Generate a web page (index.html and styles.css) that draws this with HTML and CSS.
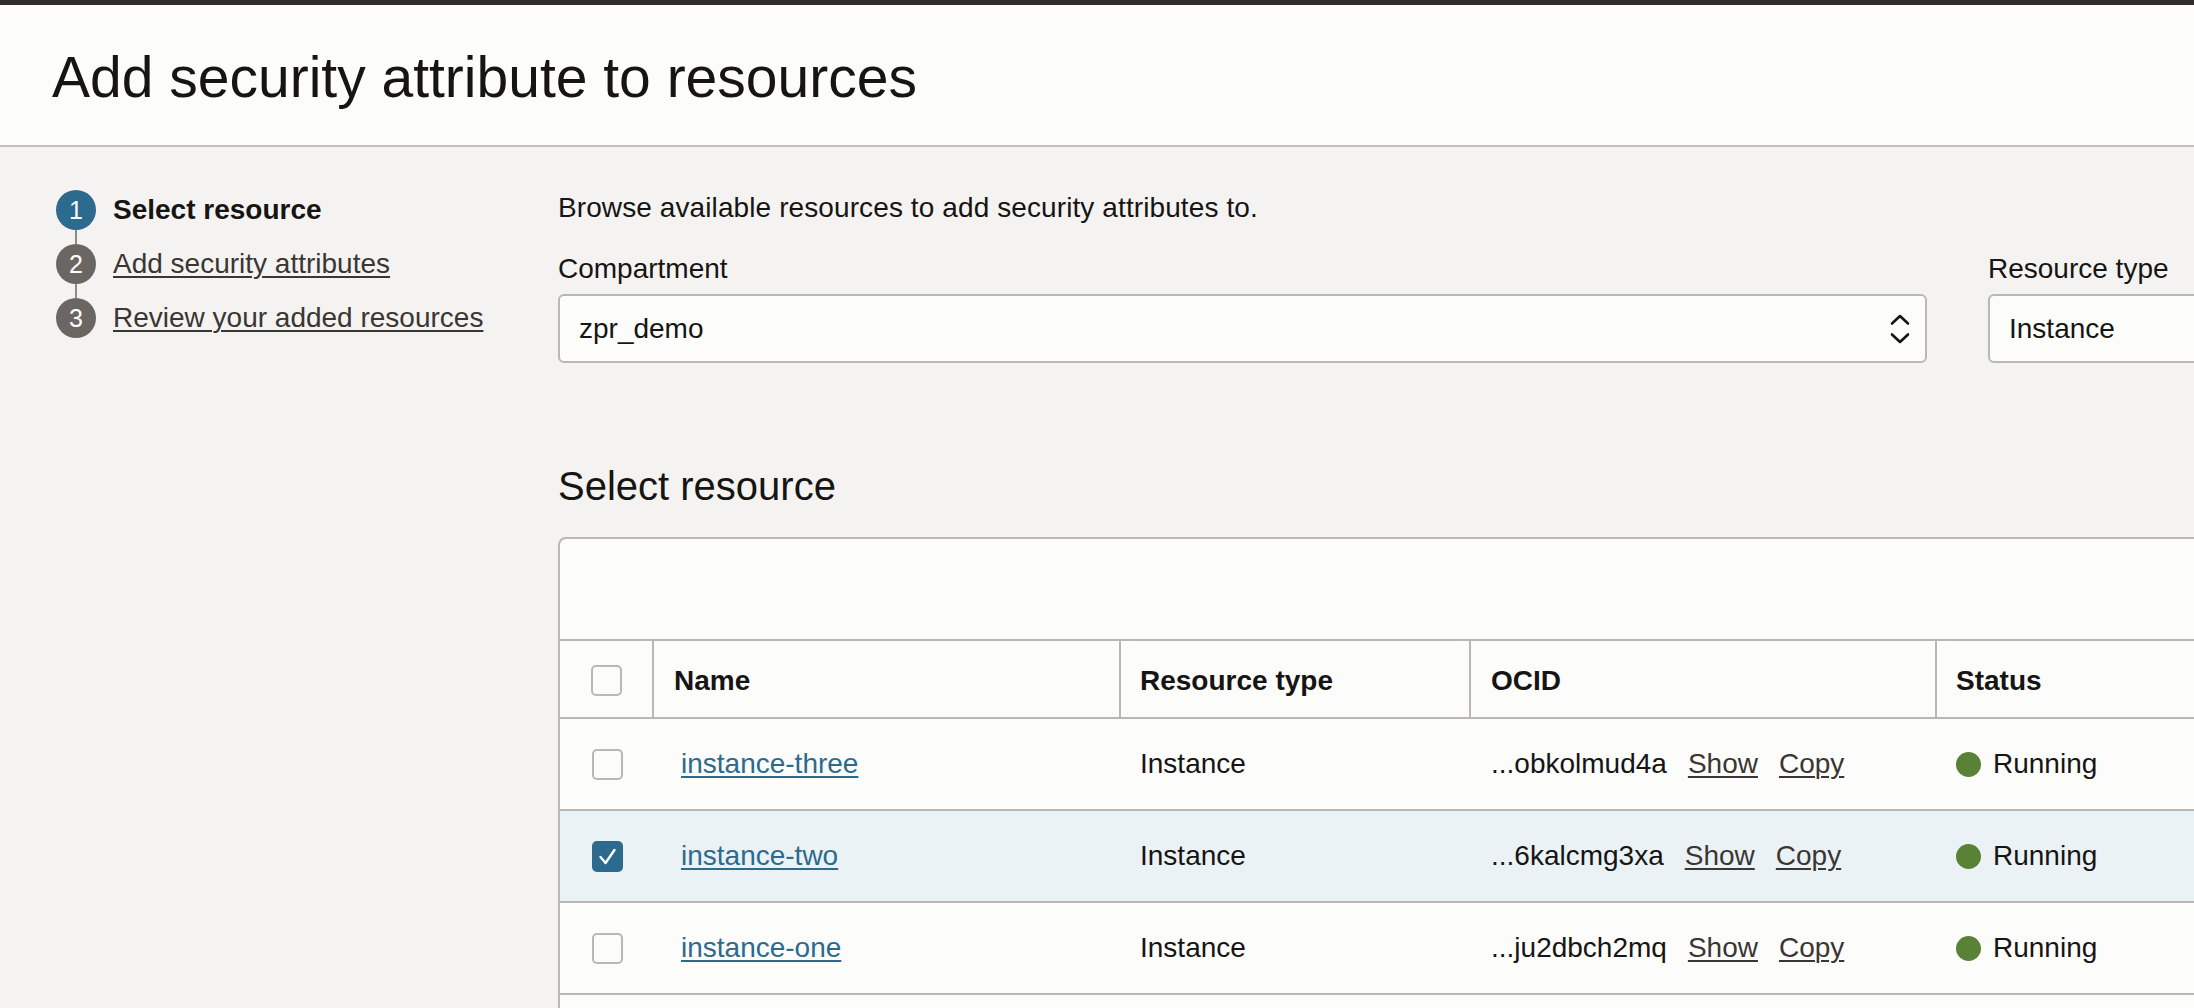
FILE: index.html
```html
<!DOCTYPE html>
<html lang="en">
<head>
<meta charset="utf-8">
<title>Add security attribute to resources</title>
<link rel="stylesheet" href="styles.css">
</head>
<body>
<div class="topbar"></div>
<header class="page-header">
  <h1 class="page-title">Add security attribute to resources</h1>
</header>
<div class="layout">
  <nav class="steps">
    <div class="step active">
      <span class="num">1</span>
      <span class="step-label">Select resource</span>
    </div>
    <div class="step">
      <span class="num">2</span>
      <a class="step-label" href="#">Add security attributes</a>
    </div>
    <div class="step last">
      <span class="num">3</span>
      <a class="step-label" href="#">Review your added resources</a>
    </div>
  </nav>
  <main class="main">
    <p class="intro">Browse available resources to add security attributes to.</p>
    <div class="fields">
      <div class="field compartment">
        <div class="field-label">Compartment</div>
        <div class="select">
          <span class="select-value">zpr_demo</span>
          <svg class="chev" width="20" height="32" viewBox="0 0 20 32" aria-hidden="true">
            <path d="M2 10.5 L10 3 L18 10.5" fill="none" stroke="#161513" stroke-width="2.6" stroke-linecap="round" stroke-linejoin="round"/>
            <path d="M2 21.5 L10 29 L18 21.5" fill="none" stroke="#161513" stroke-width="2.6" stroke-linecap="round" stroke-linejoin="round"/>
          </svg>
        </div>
      </div>
      <div class="field rtype">
        <div class="field-label">Resource type</div>
        <div class="select">
          <span class="select-value">Instance</span>
        </div>
      </div>
    </div>
    <h2 class="section-title">Select resource</h2>
    <div class="table">
      <div class="toolbar"></div>
      <div class="row head">
        <div class="cell c-check"><span class="cb"></span></div>
        <div class="cell c-name">Name</div>
        <div class="cell c-type">Resource type</div>
        <div class="cell c-ocid">OCID</div>
        <div class="cell c-status">Status</div>
      </div>
      <div class="row">
        <div class="cell c-check"><span class="cb"></span></div>
        <div class="cell c-name"><a class="link" href="#">instance-three</a></div>
        <div class="cell c-type">Instance</div>
        <div class="cell c-ocid">...obkolmud4a<a class="act" href="#">Show</a><a class="act" href="#">Copy</a></div>
        <div class="cell c-status"><span class="dot"></span>Running</div>
      </div>
      <div class="row selected">
        <div class="cell c-check"><span class="cb checked"><svg width="31" height="31" viewBox="0 0 31 31" aria-hidden="true"><path d="M8.5 16 L13.5 22 L22.5 9" fill="none" stroke="#ffffff" stroke-width="2.4" stroke-linecap="round" stroke-linejoin="round"/></svg></span></div>
        <div class="cell c-name"><a class="link" href="#">instance-two</a></div>
        <div class="cell c-type">Instance</div>
        <div class="cell c-ocid">...6kalcmg3xa<a class="act" href="#">Show</a><a class="act" href="#">Copy</a></div>
        <div class="cell c-status"><span class="dot"></span>Running</div>
      </div>
      <div class="row">
        <div class="cell c-check"><span class="cb"></span></div>
        <div class="cell c-name"><a class="link" href="#">instance-one</a></div>
        <div class="cell c-type">Instance</div>
        <div class="cell c-ocid">...ju2dbch2mq<a class="act" href="#">Show</a><a class="act" href="#">Copy</a></div>
        <div class="cell c-status"><span class="dot"></span>Running</div>
      </div>
      <div class="table-rest"></div>
    </div>
  </main>
</div>
</body>
</html>
```

FILE: styles.css
```css
* { box-sizing: border-box; }

html, body {
  margin: 0;
  padding: 0;
}

body {
  overflow: hidden;
  background: #f4f3f1;
  color: #161513;
  font-family: "Liberation Sans", Arial, sans-serif;
  font-size: 28px;
  line-height: 32px;
}

.topbar {
  height: 5px;
  background: #312d2a;
}

.page-header {
  height: 142px;
  background: #fcfcfb;
  border-bottom: 2px solid #c4bfb8;
  padding: 39px 0 0 52px;
}

.page-title {
  margin: 0;
  font-size: 57px;
  line-height: 66px;
  font-weight: 400;
  color: #161513;
  white-space: nowrap;
}

.layout {
  display: grid;
  grid-template-columns: 558px 1fr;
}

/* Stepper */
.steps {
  padding: 43px 0 0 56px;
  display: flex;
  flex-direction: column;
  gap: 14px;
}

.step {
  position: relative;
  display: flex;
  align-items: center;
  gap: 17px;
  height: 40px;
}

.step::after {
  content: "";
  position: absolute;
  left: 19px;
  top: 40px;
  width: 2px;
  height: 14px;
  background: #8f8a84;
}

.step.last::after { display: none; }

.num {
  flex: none;
  width: 40px;
  height: 40px;
  border-radius: 50%;
  background: #6b6661;
  color: #ffffff;
  font-size: 25px;
  line-height: 40px;
  text-align: center;
}

.step.active .num { background: #2c6a8e; }

.step-label {
  color: #3a3632;
  text-decoration: underline;
  text-decoration-thickness: 2px;
  text-underline-offset: 3px;
  white-space: nowrap;
}

.step.active .step-label {
  color: #161513;
  font-weight: 700;
  text-decoration: none;
}

/* Main */
.main {
  padding-top: 45px;
  min-width: 0;
}

.intro {
  margin: 0 0 29px 0;
  white-space: nowrap;
  letter-spacing: 0.1px;
}

.fields {
  display: flex;
  gap: 61px;
}

.field { flex: none; }
.field.compartment { width: 1369px; }
.field.rtype { width: 600px; }

.field-label {
  margin-bottom: 9px;
  white-space: nowrap;
}

.select {
  height: 69px;
  background: #fcfcfb;
  border: 2px solid #bcb7b0;
  border-radius: 6px;
  display: flex;
  align-items: center;
  justify-content: space-between;
  padding: 0 15px 0 19px;
}

.chev { flex: none; }

.section-title {
  margin: 99px 0 27px 0;
  font-size: 40px;
  line-height: 48px;
  font-weight: 400;
  white-space: nowrap;
}

/* Table */
.table {
  width: 1800px;
  background: #fcfcfb;
  border: 2px solid #bcb7b0;
  border-radius: 8px 0 0 0;
}

.toolbar {
  height: 102px;
  border-bottom: 2px solid #bcb7b0;
}

.row {
  display: grid;
  grid-template-columns: 94px 467px 350px 466px 1fr;
  height: 92px;
  border-bottom: 2px solid #bcb7b0;
}

.row.head {
  height: 78px;
  font-weight: 700;
}

.row.head .cell { padding-top: 3px; }

.row.selected { background: #ebf2f6; }

.cell {
  display: flex;
  align-items: center;
  padding-left: 20px;
  white-space: nowrap;
}

.row.head .cell { border-right: 2px solid #bcb7b0; }
.row.head .cell.c-status { border-right: none; }

.cell.c-type, .cell.c-status { padding-left: 19px; }

.cell.c-check {
  padding-left: 0;
  justify-content: center;
}

.cb {
  display: block;
  width: 31px;
  height: 31px;
  border: 2px solid #bcb7b0;
  border-radius: 5px;
  background: #fcfcfb;
}

.cb.checked {
  border: none;
  background: #2c6a8e;
}

.cb svg { display: block; }

.link {
  margin-left: 7px;
  color: #2c6a8e;
  text-decoration: underline;
  text-decoration-thickness: 2px;
  text-underline-offset: 3px;
}

.act {
  margin-left: 21px;
  color: #3a3632;
  text-decoration: underline;
  text-decoration-thickness: 2px;
  text-underline-offset: 3px;
}

.dot {
  flex: none;
  width: 25px;
  height: 25px;
  border-radius: 50%;
  background: #5a8236;
  margin-right: 12px;
}

.table-rest { height: 80px; }
```
